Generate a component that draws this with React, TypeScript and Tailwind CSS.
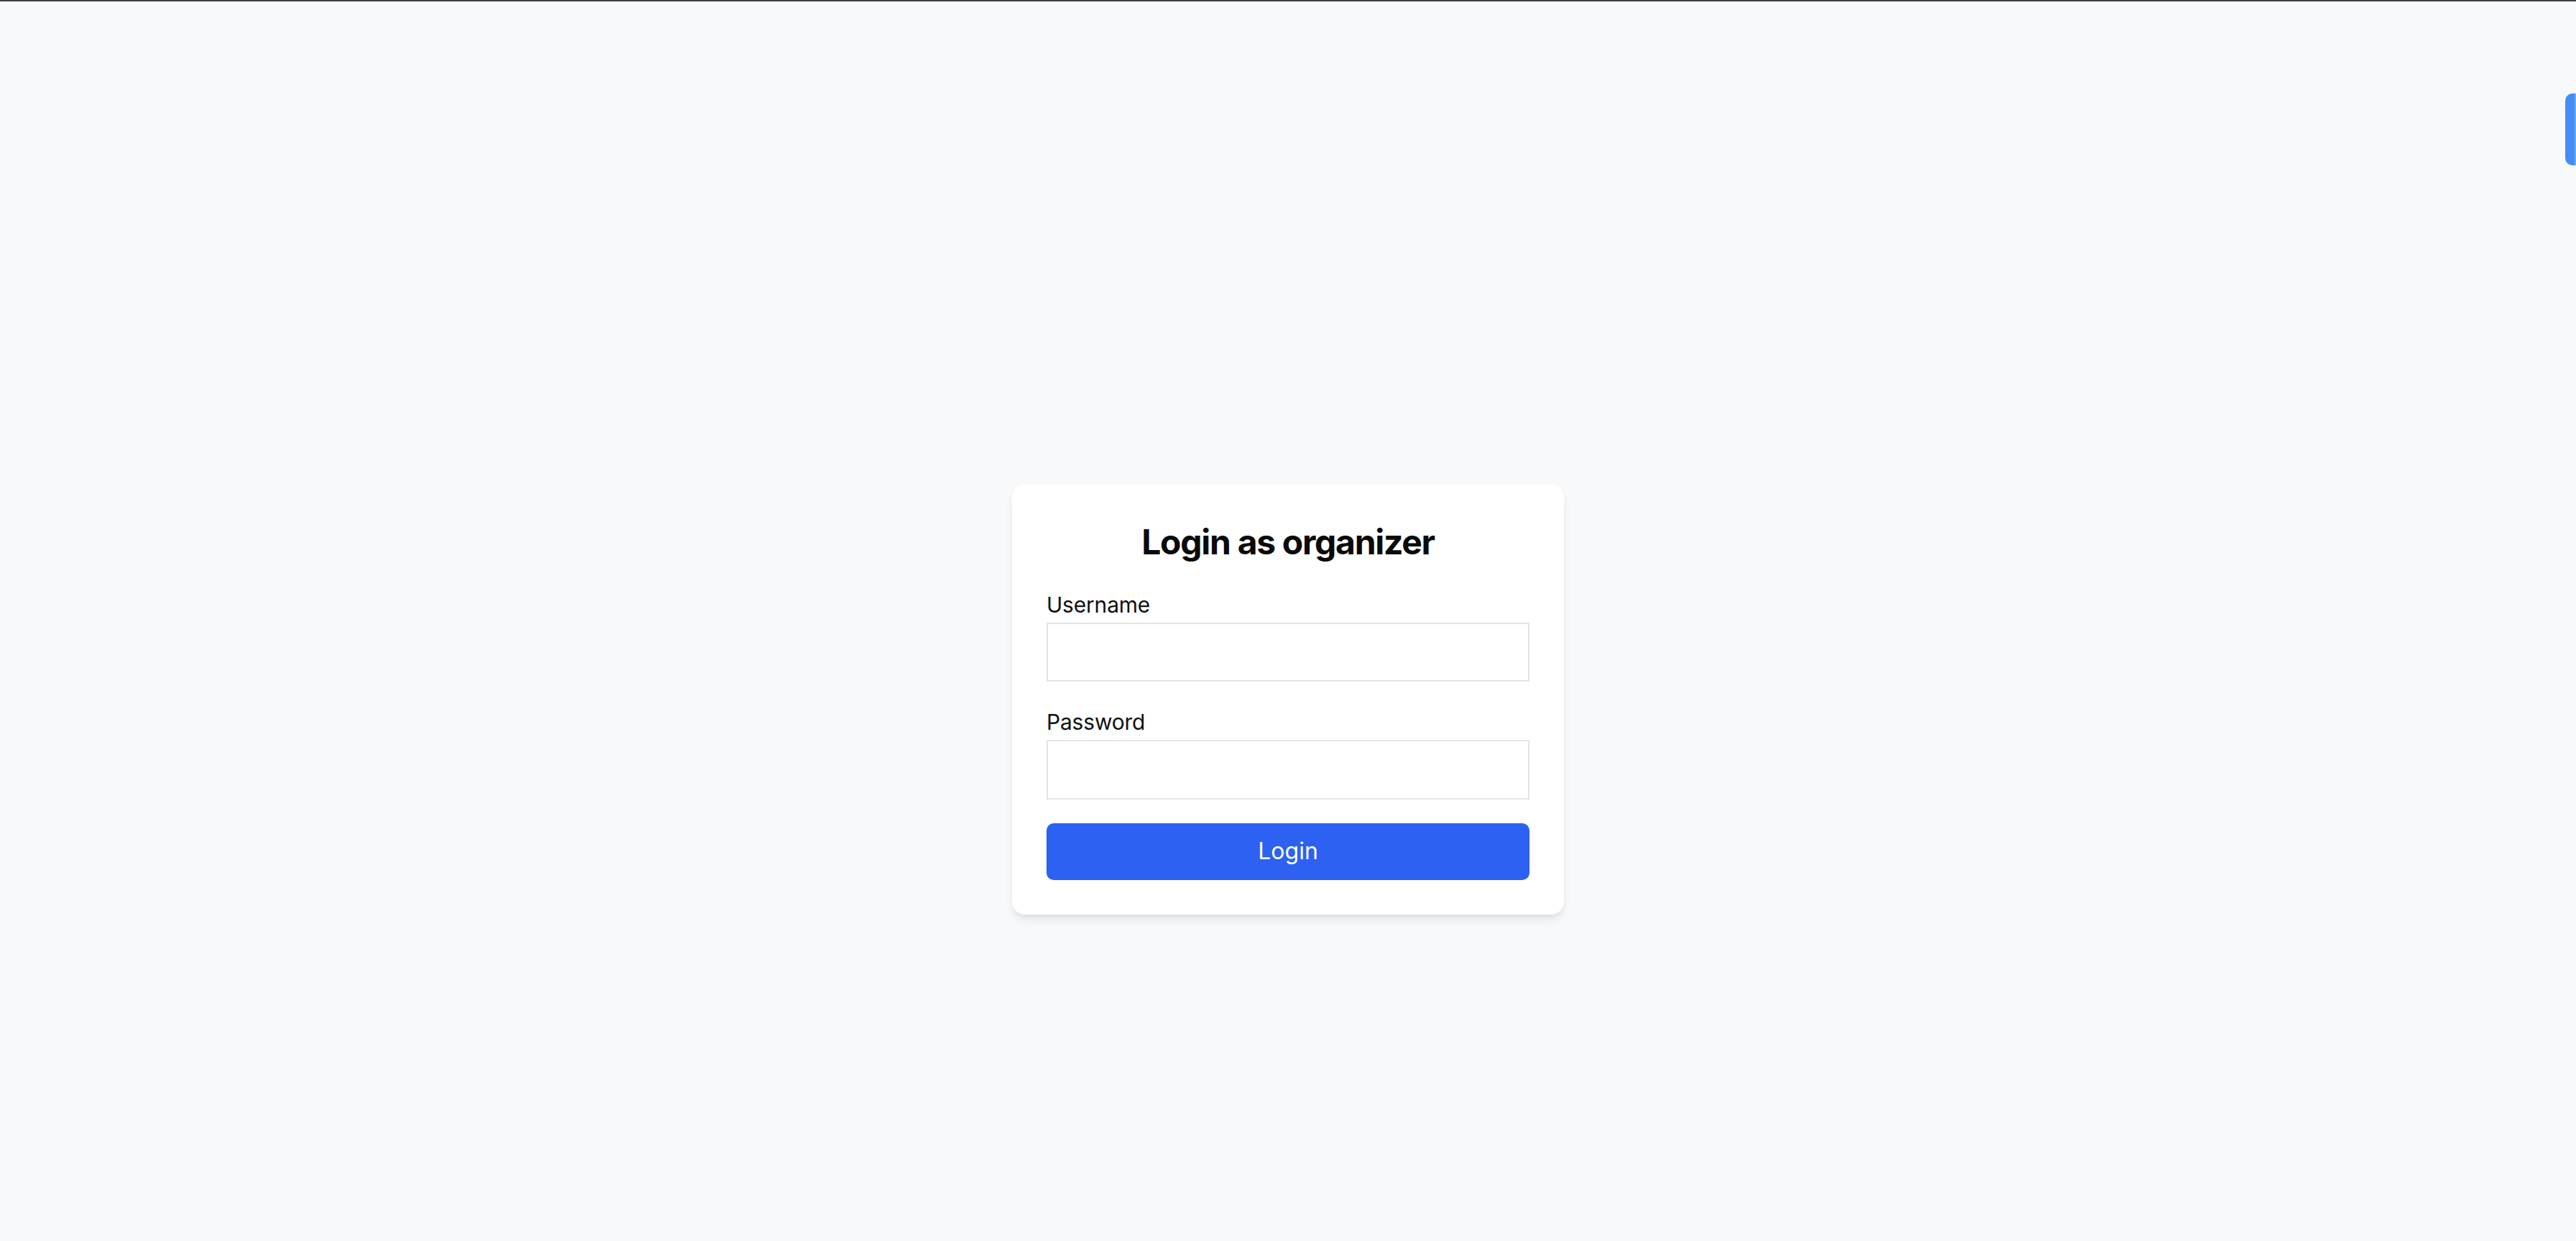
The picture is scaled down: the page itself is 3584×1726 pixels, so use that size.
import { useState } from 'react';

export default function App() {
  const [username, setUsername] = useState('');
  const [password, setPassword] = useState('');

  return (
    <div className="relative min-h-screen bg-[#f8f9fb] font-['Inter','Liberation_Sans',sans-serif] text-[#0a0a0a]">
      {/* thin dark line along the top edge */}
      <div className="h-[2px] w-full bg-[#3f3f3f]" />

      {/* blue side tab pinned to the right edge */}
      <div className="absolute right-0 top-[130px] flex h-[100px] w-[15px] overflow-hidden rounded-l-[10px] bg-[#448df5]">
        <div className="ml-auto h-full w-[2px] bg-[#6ea8f8]" />
      </div>

      <div className="flex min-h-[1724px] items-center justify-center pt-[217px]">
        <form
          onSubmit={(e) => e.preventDefault()}
          className="flex w-[768px] flex-col rounded-[18px] bg-white p-12 shadow-[0_8px_14px_-2px_rgba(0,0,0,0.09),0_4px_8px_-4px_rgba(0,0,0,0.08)]"
        >
          <h1 className="mb-[37px] text-center text-[48px] font-bold leading-[64px] tracking-[-1.3px]">
            Login as organizer
          </h1>

          <label className="block pb-[7px] text-[30px] leading-[36px] tracking-[-0.2px] text-[#111]">Username</label>
          <input
            value={username}
            onChange={(e) => setUsername(e.target.value)}
            className="h-[82px] w-full border-2 border-[#e4e4e4] bg-white px-4 text-[28px] outline-none"
          />

          <label className="mt-[38px] block pb-[7px] text-[30px] leading-[36px] tracking-[-0.2px] text-[#111]">Password</label>
          <input
            type="password"
            value={password}
            onChange={(e) => setPassword(e.target.value)}
            className="h-[83px] w-full border-2 border-[#e4e4e4] bg-white px-4 text-[28px] outline-none"
          />

          <button
            type="submit"
            className="mt-[33px] h-[79px] w-full rounded-[10px] bg-[#2c61f1] text-[32px] font-normal text-white"
          >
            Login
          </button>
        </form>
      </div>
    </div>
  );
}
